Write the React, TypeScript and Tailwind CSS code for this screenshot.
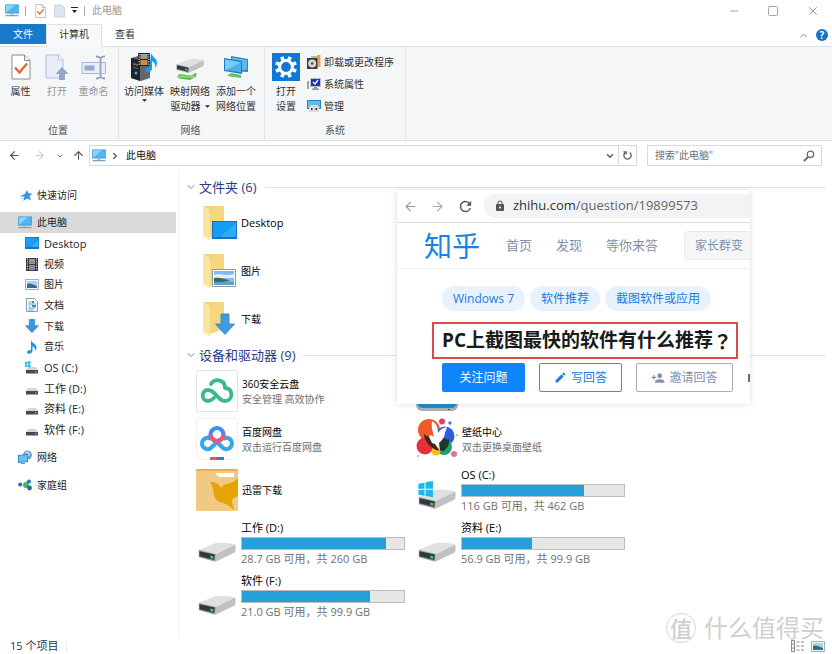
import type { ReactNode } from 'react'
import { ArrowLeft, ArrowRight, ArrowUp, ChevronDown, ChevronRight, ChevronUp, Minus, Square, X } from 'lucide-react'
import { MdEdit, MdLock, MdPersonAdd, MdRefresh } from 'react-icons/md'

/* ---------- icons ---------- */

function PcIcon() {
  return (
    <svg viewBox="0 0 28 26" className="w-[14px] h-[13px] shrink-0">
      <rect x="0.5" y="1" width="27" height="18" fill="#2b8fd3" />
      <path d="M2 2.500h24v15H2z" fill="#4fb4f0" />
      <path d="M2 17.500V2.500h18z" fill="#8ad3fb" />
      <path d="M11 19h6v3h-6z" fill="#a9bccb" />
      <path d="M1 22h26v2.500H1z" fill="#7da0ba" />
    </svg>
  )
}

function CheckDocIcon({ className }: { className: string }) {
  return (
    <svg viewBox="0 0 20 26" className={className}>
      <path d="M1 1h12.500L19 6.500V25H1z" fill="#fff" stroke="#8c8c8c" />
      <path d="M13.500 1v5.500H19" fill="#eee" stroke="#8c8c8c" />
      <path d="M4 13.500l4.500 5 7.500-9" fill="none" stroke="#e2682c" strokeWidth="2.400" />
    </svg>
  )
}

function OpenDocIcon() {
  return (
    <svg viewBox="0 0 24 28" className="w-6 h-7">
      <path d="M1 2h12.500L18 6.500V25H1z" fill="#e9edf8" stroke="#b3c1dd" />
      <path d="M13.500 2v5H18" fill="#fff" stroke="#b3c1dd" />
      <path d="M17 14l6.500 7H20v6h-6v-6h-3.500z" fill="#93a6c8" />
    </svg>
  )
}

function RenameIcon() {
  return (
    <svg viewBox="0 0 26 28" className="w-[26px] h-7">
      <path d="M1 9.500h23.500v11H1z" fill="#e9eef9" stroke="#a9b7d6" />
      <path d="M3.500 12.500h10v5h-10z" fill="#93a9d4" />
      <path d="M15 3.500c2.500 0 4 .8 4.500 2 .5-1.200 2-2 4.500-2M19.500 5v19M15 25.500c2.500 0 4-.8 4.500-2 .5 1.200 2 2 4.500 2" fill="none" stroke="#93a3c4" strokeWidth="1.800" />
    </svg>
  )
}

function MediaIcon() {
  return (
    <svg viewBox="0 0 28 28" className="w-7 h-7">
      <path d="M1 5l7-2 12 2v20l-9 3-10-3z" fill="#60676d" />
      <path d="M1 5l9 2v21l-9-3z" fill="#202428" />
      <path d="M3 10l5 1v2l-5-1zM3 14l5 1v1l-5-1z" fill="#5e6b75" />
      <circle cx="6" cy="20" r="1.500" fill="#31a9ef" />
      <path d="M8 0h12v13H8z" fill="#252321" />
      <path d="M10.500 1h7v5h-7z" fill="#86aad0" />
      <path d="M10.500 4l3-1 4 2v1h-7zM10.500 7h7v5h-7z" fill="#bd9355" />
      <path d="M9.200 1v11M18.800 1v11" stroke="#f2f2f2" strokeDasharray="1.200 1.200" />
      <path d="M21 0c1 4 6 5 6 10 0 2-1 4-2 5 1-4-1-6-3-7v8c0 3-6 4.500-6.500 1.500-.3-2 2-3.500 4-3z" fill="#1c9be8" />
    </svg>
  )
}

function DriveShape() {
  return (
    <>
      <path d="M2 21L50 1c18-2 42 0 59 4L52 33z" fill="#dfe0e2" />
      <path d="M52 33l57-28c2 6 1 17 0 23L50 56z" fill="#bfc1c4" />
      <path d="M1 21l51 12-2 23L1 43z" fill="#9a9da0" />
      <path d="M3 25l45 10-1 16L3 40z" fill="#35383b" />
      <path d="M35 38l9 2v7l-9-2z" fill="#3fd05a" />
    </>
  )
}

function WindowsFlag() {
  return <path d="M0-18l18-3v18H0zM21-22l22-4v23H21zM0 0h18v18L0 15zM21 0h22v22l-22-4z" fill="#18b9ee" />
}

function DriveIcon({ windows = false }: { windows?: boolean }) {
  return (
    <svg viewBox="0 -26 110 83" className="w-[38px] h-[28px]">
      <DriveShape />
      {windows && <WindowsFlag />}
    </svg>
  )
}

function MapDriveIcon() {
  return (
    <svg viewBox="0 -20 110 104" className="w-7 h-[26px]">
      <path d="M10 60l50 6 20-12v16L55 84 10 78z" fill="#55b947" />
      <path d="M4 66h72v9H4z" fill="#8ed482" />
      <DriveShape />
    </svg>
  )
}

function NetPlaceIcon() {
  return (
    <svg viewBox="0 0 26 24" className="w-[26px] h-6">
      <path d="M8 1l17 3v13l-17-1z" fill="#2786c8" />
      <path d="M9 2.500l15 2.500v10l-15-.500z" fill="#5db9f0" />
      <path d="M1 3l18 3v13L1 16z" fill="#1d7dc2" />
      <path d="M2 4.500l16 2.700v10L2 15z" fill="#4cb1ef" />
      <path d="M2 4.500l16 2.700L3 15.200 2 15z" fill="#7accf8" />
      <path d="M8 18l10 2v3l-14-2z" fill="#65c35a" />
    </svg>
  )
}

function GearIcon() {
  return (
    <svg viewBox="0 0 28 28" className="w-7 h-7">
      <path d="M0 0h28v28H0z" fill="#0f78d4" />
      <circle cx="14" cy="14" r="6.400" fill="none" stroke="#fff" strokeWidth="3" />
      <g stroke="#fff" strokeWidth="3.600">
        <path d="M14 3v4M14 21v4M3 14h4M21 14h4" transform="rotate(22.500 14 14)" />
        <path d="M14 3v4M14 21v4M3 14h4M21 14h4" transform="rotate(67.500 14 14)" />
      </g>
    </svg>
  )
}

function UninstallIcon() {
  return (
    <svg viewBox="0 0 14 14" className="w-[14px] h-[14px]">
      <path d="M4 1h7v11H4z" fill="#a9c38b" />
      <path d="M10 0h3.500v12H10z" fill="#e2a36b" />
      <path d="M0 3h10.500v11H0z" fill="#3c3c3c" />
      <circle cx="5.200" cy="8.500" r="4" fill="#d9d9d9" />
      <circle cx="5.200" cy="8.500" r="1.300" fill="#454545" />
    </svg>
  )
}

function SystemPropsIcon() {
  return (
    <svg viewBox="0 0 14 14" className="w-[14px] h-[14px]">
      <path d="M0 4h2v8H0z" fill="#9aa1a8" />
      <path d="M3 1h11v9H3z" fill="#b9bfd0" />
      <path d="M4 2h9v7H4z" fill="#2530b4" />
      <path d="M6 5l2 2 3-4" fill="none" stroke="#fff" strokeWidth="1.300" />
      <path d="M7 10h3v1.500h2V13H5v-1.500h2z" fill="#8b94a5" />
    </svg>
  )
}

function ManageIcon() {
  return (
    <svg viewBox="0 0 14 14" className="w-[14px] h-[14px]">
      <path d="M0 1h14v9H0z" fill="#2c82be" />
      <path d="M1 2h12v7H1z" fill="#62bbed" />
      <path d="M2 8l2-2h6l2 2v5H2z" fill="#d8dadc" />
      <path d="M4 9h1.500v2H4zM8.500 9H10v2H8.500z" fill="#333" />
    </svg>
  )
}

function StarIcon() {
  return (
    <svg viewBox="0 0 14 14" className="w-[13px] h-[13px] shrink-0">
      <path d="M7.500 1l1.700 3.600 4.300.2-3.200 3 1.600 4.500-4-2.200L3.500 13l1.200-4.300L1 7l4.300-1.500z" fill="#2f97dc" />
      <path d="M0 8h5M1 10h3" stroke="#7cbde8" strokeWidth="0.800" />
    </svg>
  )
}

function DesktopIcon() {
  return (
    <svg viewBox="0 0 14 12" className="w-[14px] h-3">
      <path d="M0 0h14v12H0z" fill="#1273c4" />
      <path d="M.7.7h12.600v9.300H.7z" fill="#1c9cf2" />
      <path d="M6 10l7.300-7v7z" fill="#35abf8" />
    </svg>
  )
}

function VideoIcon() {
  return (
    <svg viewBox="0 0 12 13" className="w-3 h-[13px]">
      <path d="M0 0h12v13H0z" fill="#3b3a3d" />
      <path d="M3 1h6v5H3z" fill="#7f9bc4" />
      <path d="M3 4l3-1.500L9 5v1H3z" fill="#b48e4e" />
      <path d="M3 7h6v5H3z" fill="#8d86ab" />
      <path d="M1.400.5v12M10.600.5v12" stroke="#ddd" strokeDasharray="1.200 1.200" />
    </svg>
  )
}

function PictureIcon() {
  return (
    <svg viewBox="0 0 14 11" className="w-[14px] h-[11px]">
      <path d="M.5.5h13v10H.5z" fill="#f4f7fa" stroke="#a5adb5" />
      <path d="M2 2h10v7H2z" fill="#a9d5ef" />
      <path d="M2 5c3-1 5 0 10 2v2H2z" fill="#3b6b84" />
    </svg>
  )
}

function TextDocIcon() {
  return (
    <svg viewBox="0 0 12 14" className="w-3 h-[14px]">
      <path d="M.5.5h8l3 3v10H.5z" fill="#fff" stroke="#8e9aa3" />
      <path d="M2.500 4h3M2.500 6h7M2.500 8h2M2.500 10h7M2.500 12h5" stroke="#4aa3d2" />
      <path d="M6 3h2v2H6zM6 7h4v2H6z" fill="#3b8ab8" />
    </svg>
  )
}

function DownIcon() {
  return (
    <svg viewBox="0 0 20 20" className="w-[14px] h-[14px]">
      <path d="M6 0.500h8v9h5.500L10 19.500.5 9.500H6z" fill="#3f93da" stroke="#2a7fc5" strokeWidth="0.800" />
    </svg>
  )
}

function MusicIcon() {
  return (
    <svg viewBox="0 0 12 14" className="w-3 h-[14px]">
      <path d="M5 0c1 3 5 4 5.500 7 .2 1.500-.5 3-1.500 4 .5-2.500-.5-4-2.500-4.500V11c0 2.500-5 4-5.500 1.500-.3-1.700 2-3 4-2.500z" fill="#1d96e2" />
    </svg>
  )
}

function SmallDriveIcon({ windows = false }: { windows?: boolean }) {
  return (
    <svg viewBox="0 0 14 13" className="w-[14px] h-[13px]">
      <path d="M3 6h8l2 3H1z" fill="#d3d5d7" />
      <path d="M1 9h12v3.500H1z" fill="#45494c" />
      <path d="M10 10.200h1.500v1H10z" fill="#6fe07f" />
      {windows && <path d="M0 1l2-.3V3H0zM2.500.6L5.500 0v3h-3zM0 3.500h2V6l-2-.3zM2.500 3.500h3v3l-3-.4z" fill="#2bb6ea" />}
    </svg>
  )
}

function NetworkIcon() {
  return (
    <svg viewBox="0 0 14 14" className="w-[14px] h-[14px] shrink-0">
      <circle cx="9.500" cy="5" r="4.500" fill="#6f9fc0" />
      <path d="M7 2l3-1 3 3-3 3z" fill="#a9cde2" />
      <path d="M0 5l10-1v8l-10 1z" fill="#2686c9" />
      <path d="M.8 5.800l8.400-.8v6.200L.8 12z" fill="#67bff2" />
      <path d="M3 13l4-.5v1.500H3z" fill="#7f93a2" />
    </svg>
  )
}

function HomegroupIcon() {
  return (
    <svg viewBox="0 0 14 12" className="w-[14px] h-3 shrink-0">
      <path d="M9 1.500L6 7l6 3z" fill="#51b848" />
      <circle cx="2.200" cy="5.500" r="2" fill="#2a6fa8" />
      <circle cx="8" cy="6" r="3" fill="#4bb354" />
      <circle cx="11" cy="2.500" r="2" fill="#2676b2" />
      <circle cx="11.500" cy="9" r="2.400" fill="#236a9f" />
    </svg>
  )
}

function FolderIcon({ kind }: { kind: 'desktop' | 'picture' | 'download' }) {
  return (
    <svg viewBox="0 0 36 36" className="w-9 h-9">
      <path d="M1 1h21v27l-14 4z" fill="#f3d37c" />
      <path d="M1 1l7 3.500v31L1 31z" fill="#fbe3a0" />
      <path d="M8 4.500L22 1v27L8 33z" fill="#f5d681" />
      {kind === 'desktop' && (
        <>
          <path d="M10 16h25v18H10z" fill="#1672bd" />
          <path d="M11 17h23v15H11z" fill="#139df5" />
          <path d="M18 32l16-14v14z" fill="#2cabf9" />
        </>
      )}
      {kind === 'picture' && (
        <>
          <path d="M10.500 16.500h23v17h-23z" fill="#fff" stroke="#8c98a4" />
          <path d="M12 18h20v14H12z" fill="#7fbbed" />
          <path d="M12 22c5-3 9 2 20-1v4H12z" fill="#e5f1f8" />
          <path d="M12 25c4-1 12 1 16 3l-16 2z" fill="#3f6b4f" />
          <path d="M12 29h20v3H12z" fill="#5f9fc3" />
        </>
      )}
      {kind === 'download' && <path d="M19 13h8v10h5.500L23 33.500 13.500 23H19z" fill="#3f9be3" stroke="#2c82c8" strokeWidth="0.800" />}
    </svg>
  )
}

function Cloud360Icon() {
  return (
    <svg viewBox="0 0 42 42" className="w-[42px] h-[42px]">
      <rect x="0.500" y="0.500" width="41" height="41" rx="2" fill="#fff" stroke="#e2e2e2" />
      <path d="M15 14c3-6 14-5 14 4M29 18c9 0 8 13 0 13-8 0-9-11-17-11-7 0-7 11 0 11 3 0 4-1 6-3" fill="none" stroke="#3bb98c" strokeWidth="3.800" strokeLinecap="round" />
    </svg>
  )
}

function BaiduIcon() {
  return (
    <svg viewBox="0 0 42 42" className="w-[42px] h-[42px]">
      <rect x="0.500" y="0.500" width="41" height="41" rx="2" fill="#fff" stroke="#f0f0f0" />
      <g fill="none" strokeWidth="4.200">
        <path d="M15 21a5.600 5.600 0 1 0 1 8l5-5 5 5a5.600 5.600 0 1 0 1-8" stroke="#32a7ee" />
        <circle cx="21" cy="16.500" r="6.500" stroke="#3b8ff0" />
        <path d="M14.500 16.500a6.500 6.500 0 0 0 13 0" stroke="#ef5672" />
      </g>
      <path d="M14 39h7v3h-7z" fill="#e55370" />
      <path d="M21 39h7v3h-7z" fill="#2a7fd6" />
    </svg>
  )
}

function XunleiIcon() {
  return (
    <svg viewBox="0 0 42 42" className="w-[42px] h-[42px]">
      <rect width="42" height="42" rx="1.500" fill="#f1c984" />
      <path d="M0 1.500Q0 0 2 0h38q2 0 2 2H0z" fill="#e8b14b" />
      <path d="M19 4h19v4H23z" fill="#fff" />
      <path d="M14 13c5 0 8 1 11 6 2-3 5-4 9-5 3-1 5-2 8-5v18l-4 2c-2 1-2 2-2 4l2 8c-4-3-7-6-11-7-5-1-8-4-9-8-1-3 0-4-1-7-1-2-2-4-3-6z" fill="#e6a400" />
    </svg>
  )
}

function WallpaperIcon() {
  return (
    <svg viewBox="0 0 42 42" className="w-[42px] h-[42px]">
      <circle cx="13" cy="12" r="11" fill="#f0592a" />
      <circle cx="9" cy="28" r="8.500" fill="#e5303a" />
      <circle cx="29" cy="18" r="9.500" fill="#2f5de0" />
      <circle cx="28" cy="29" r="8" fill="#1fa468" />
      <circle cx="20" cy="33" r="4.500" fill="#f7bd1c" />
      <path d="M8 16c3 3 8 4 12 2l11 3-3 12-8-1c-6-3-12-9-12-16z" fill="#46241a" />
      <path d="M22 25l11-4c1 5-2 11-7 12z" fill="#173c2c" />
      <path d="M16 3c5 3 6 8 6 12 2-3 4-5 9-6-1 2 0 3-2 5 0 6-4 9-6 11l1 8-5-7-3-1c-1-3-3-5-3-7 2-1 4 0 5 1-1-5-3-10-2-16z" fill="#fff" />
      <circle cx="26" cy="3.500" r="3" fill="#e0444e" />
      <circle cx="34" cy="5" r="1.700" fill="#4477ef" />
      <circle cx="38" cy="36" r="3" fill="#ea6fa4" />
      <circle cx="41" cy="17" r="1" fill="#a9bb35" />
      <circle cx="2" cy="38" r="1" fill="#efa244" />
    </svg>
  )
}

function DeviceIcon() {
  return (
    <svg viewBox="0 0 42 42" className="w-[42px] h-[42px]">
      <rect y="2" width="42" height="39" rx="6" fill="#a9b1b7" />
      <rect x="1.500" y="2" width="39" height="36" rx="5" fill="#2589cf" />
      <path d="M32 39h2v1h-2z" fill="#555" />
    </svg>
  )
}

function SearchIcon() {
  return (
    <svg viewBox="0 0 12 12" className="w-3 h-3" fill="none" stroke="#666">
      <circle cx="7.500" cy="4.300" r="3.200" strokeWidth="1.300" />
      <path d="M5.200 6.800L1 11" strokeWidth="1.900" />
    </svg>
  )
}

function Caret() {
  return (
    <svg viewBox="0 0 6 3" className="w-[5px] h-[3px]">
      <path d="M0 0h6L3 3z" fill="#222" />
    </svg>
  )
}

/* ---------- data ---------- */

const treeItems = [
  { label: 'Desktop', icon: <DesktopIcon /> },
  { label: '视频', icon: <VideoIcon /> },
  { label: '图片', icon: <PictureIcon /> },
  { label: '文档', icon: <TextDocIcon /> },
  { label: '下载', icon: <DownIcon /> },
  { label: '音乐', icon: <MusicIcon /> },
  { label: 'OS (C:)', icon: <SmallDriveIcon windows /> },
  { label: '工作 (D:)', icon: <SmallDriveIcon /> },
  { label: '资料 (E:)', icon: <SmallDriveIcon /> },
  { label: '软件 (F:)', icon: <SmallDriveIcon /> },
]

const folders = [
  { label: 'Desktop', kind: 'desktop' },
  { label: '图片', kind: 'picture' },
  { label: '下载', kind: 'download' },
] as const

/* ---------- ribbon ---------- */

function RibbonGroup({ title, className, children }: { title: string; className: string; children: ReactNode }) {
  return (
    <section className={`flex flex-col justify-between border-r border-[#e3e5e8] ${className}`}>
      <div className="flex">{children}</div>
      <h2 className="pr-1 pb-0.5 text-center leading-4 text-[#555]">{title}</h2>
    </section>
  )
}

function RibbonButton({ icon, lines, className, arrow }: { icon: ReactNode; lines: string[]; className: string; arrow?: 'below' | 'inline' }) {
  return (
    <button className={`flex flex-col items-center pt-1.5 leading-[15px] whitespace-nowrap ${className}`}>
      <span className="flex h-7 items-center justify-center mb-[3px]">{icon}</span>
      {lines.map((line, i) => (
        <span key={line} className="flex items-center gap-1">
          {line}
          {arrow === 'inline' && i === lines.length - 1 && <Caret />}
        </span>
      ))}
      {arrow === 'below' && <Caret />}
    </button>
  )
}

function Ribbon() {
  return (
    <div className="flex h-[95px] shrink-0 border-y border-[#dfe2e5] bg-[#f4f6f8] text-[#333]">
      <RibbonGroup title="位置" className="w-[119px] pl-0.5">
        <RibbonButton icon={<CheckDocIcon className="w-5 h-[26px]" />} lines={['属性']} className="w-[37px]" />
        <RibbonButton icon={<OpenDocIcon />} lines={['打开']} className="w-9 text-[#999]" />
        <RibbonButton icon={<RenameIcon />} lines={['重命名']} className="w-[37px] text-[#999]" />
      </RibbonGroup>
      <RibbonGroup title="网络" className="w-[146px] pl-0.5">
        <RibbonButton icon={<MediaIcon />} lines={['访问媒体']} className="w-[46px]" arrow="below" />
        <RibbonButton icon={<MapDriveIcon />} lines={['映射网络', '驱动器']} className="w-[46px]" arrow="inline" />
        <RibbonButton icon={<NetPlaceIcon />} lines={['添加一个', '网络位置']} className="w-[46px]" />
      </RibbonGroup>
      <RibbonGroup title="系统" className="w-[141px] pl-1">
        <RibbonButton icon={<GearIcon />} lines={['打开', '设置']} className="w-[34px]" />
        <div className="flex flex-col pt-1 pl-1">
          <button className="flex h-[22px] items-center gap-[3px]"><UninstallIcon />卸载或更改程序</button>
          <button className="flex h-[22px] items-center gap-[3px]"><SystemPropsIcon />系统属性</button>
          <button className="flex h-[22px] items-center gap-[3px]"><ManageIcon />管理</button>
        </div>
      </RibbonGroup>
    </div>
  )
}

/* ---------- top bars ---------- */

function TitleBar() {
  return (
    <header className="flex h-6 shrink-0 items-center pb-[3px] pl-[5px] pr-3">
      <PcIcon />
      <span className="ml-1.5 h-[10px] w-px bg-[#aaa]" />
      <CheckDocIcon className="ml-[9px] w-[11px] h-[14px]" />
      <svg viewBox="0 0 12 14" className="ml-2 w-[11px] h-[14px]">
        <path d="M.5.500h8l3 3v10H.5z" fill="#dde4f1" stroke="#c5cfe2" />
      </svg>
      <svg viewBox="0 0 7 7" className="ml-1.5 w-[7px] h-[7px]">
        <path d="M0 0h7v1H0zM1 3h5L3.500 6z" fill="#222" />
      </svg>
      <span className="ml-1.5 h-[10px] w-px bg-[#aaa]" />
      <h1 className="ml-[7px] text-[#999]">此电脑</h1>
      <div className="ml-auto flex gap-[27px] text-[#888]">
        <button aria-label="最小化"><Minus className="w-3 h-3" strokeWidth={1.5} /></button>
        <button aria-label="最大化"><Square className="w-3 h-3" strokeWidth={1.5} /></button>
        <button aria-label="关闭"><X className="w-[14px] h-[14px]" strokeWidth={1.5} /></button>
      </div>
    </header>
  )
}

function TabBar() {
  return (
    <nav className="flex h-[22px] shrink-0 items-stretch text-[#333]">
      <button className="mb-0.5 w-[46px] bg-[#1979ca] text-white">文件</button>
      <button className="relative -mb-px w-14 border border-b-0 border-[#dfe2e5] bg-[#f8f9fa] pb-1">计算机</button>
      <button className="w-[46px] pb-0.5">查看</button>
      <div className="ml-auto flex items-center gap-[7px] pr-1">
        <button aria-label="折叠功能区"><ChevronUp className="w-[11px] h-[11px] text-[#777]" /></button>
        <button aria-label="帮助" className="flex w-3 h-3 items-center justify-center rounded-full bg-[#1273c4] font-bold text-white leading-3">?</button>
      </div>
    </nav>
  )
}

function AddressBar() {
  return (
    <div className="flex h-[29px] shrink-0 items-center pl-2 pr-2.5">
      <button aria-label="后退"><ArrowLeft className="w-[13px] h-[13px] text-[#555]" /></button>
      <button aria-label="前进" className="ml-3"><ArrowRight className="w-[13px] h-[13px] text-[#ccc]" /></button>
      <button aria-label="最近位置" className="ml-2.5"><ChevronDown className="w-2 h-2 text-[#777]" strokeWidth={3} /></button>
      <button aria-label="上移" className="ml-2"><ArrowUp className="w-[13px] h-[13px] text-[#555]" /></button>
      <div className="ml-1 flex h-[21px] flex-1 items-center border border-[#d9d9d9] pl-0.5">
        <PcIcon />
        <ChevronRight className="ml-1 w-2.5 h-2.5 text-[#555]" strokeWidth={3} />
        <span className="ml-1.5 text-[#111]">此电脑</span>
        <button aria-label="展开" className="ml-auto mr-[3px]"><ChevronDown className="w-2.5 h-2.5 text-[#666]" strokeWidth={4} /></button>
        <button aria-label="刷新" className="flex h-full w-[18px] items-center justify-center border-l border-[#d9d9d9]">
          <svg viewBox="0 0 12 12" className="w-[11px] h-[11px]" fill="none" stroke="#666" strokeWidth="1.500">
            <path d="M4 2.500a4 4 0 1 0 4.500.3M4.500 5V2H1.500" />
          </svg>
        </button>
      </div>
      <label className="ml-2.5 flex h-[21px] w-[175px] items-center border border-[#d9d9d9] pl-[7px] pr-1.5">
        <input aria-label="搜索" placeholder={'搜索"此电脑"'} className="min-w-0 flex-1 outline-none placeholder:text-[#707070]" />
        <SearchIcon />
      </label>
    </div>
  )
}

/* ---------- sidebar ---------- */

function Sidebar() {
  return (
    <aside className="w-[179px] shrink-0 border-r border-[#f3f3f3] pr-0.5 pt-[14px] text-[#222]">
      <a href="#quick" className="flex h-[22px] items-center gap-1 pl-5"><StarIcon />快速访问</a>
      <a href="#pc" className="mt-1.5 flex h-[21px] items-center gap-[5px] bg-[#d9d9d9] pl-[18px]"><PcIcon />此电脑</a>
      <ul className="grid h-[207px] auto-rows-fr">
        {treeItems.map((item) => (
          <li key={item.label}>
            <a href="#item" className="flex h-full items-center gap-[5px] pl-[25px]">
              <span className="flex w-[14px] justify-center">{item.icon}</span>
              <span className={/[A-Z]/.test(item.label) ? 'text-[11px]' : ''}>{item.label}</span>
            </a>
          </li>
        ))}
      </ul>
      <a href="#network" className="mt-1.5 flex h-[22px] items-center gap-[5px] pl-[18px]"><NetworkIcon />网络</a>
      <a href="#homegroup" className="mt-1.5 flex h-[22px] items-center gap-[5px] pl-[18px]"><HomegroupIcon />家庭组</a>
    </aside>
  )
}

/* ---------- content ---------- */

function SectionHeader({ title }: { title: string }) {
  return (
    <div className="flex h-6 items-center pl-1.5 pr-1.5">
      <ChevronDown className="w-3 h-3 text-[#777]" strokeWidth={1.8} />
      <h2 className="ml-0.5 text-[13px] text-[#2b3a85]">{title}</h2>
      <span className="ml-2 h-px flex-1 bg-[#e2e2e2]" />
    </div>
  )
}

function AppTile({ icon, name, note }: { icon: ReactNode; name: string; note?: string }) {
  return (
    <li className="flex items-center gap-1">
      {icon}
      <div className="pt-0.5 leading-[15px]">
        <p className="text-black">{name}</p>
        {note && <p className="text-[#707070]">{note}</p>}
      </div>
    </li>
  )
}

function DriveTile({ name, note, used, windows }: { name: string; note: string; used: number; windows?: boolean }) {
  return (
    <li className="flex items-center gap-[3px] text-[11px]">
      <span className="flex w-[42px] justify-center pt-2.5"><DriveIcon windows={windows} /></span>
      <div className="pt-px">
        <p className="leading-[15px] text-black">{name}</p>
        <div role="meter" aria-label={name} aria-valuenow={used} className="mt-0.5 mb-px h-[13px] w-[164px] border border-[#bcbcbc] bg-[#e6e6e6]">
          <div className="h-full bg-[#26a0da]" style={{ width: `${used}%` }} />
        </div>
        <p className="leading-[15px] text-[#707070]">{note}</p>
      </div>
    </li>
  )
}

function Content() {
  return (
    <main className="relative flex-1 pt-[5px]">
      <SectionHeader title="文件夹 (6)" />
      <ul>
        {folders.map((folder) => (
          <li key={folder.label} className="flex h-12 items-center gap-[3px] pl-[23px]">
            <FolderIcon kind={folder.kind} />
            <span className={folder.kind === 'desktop' ? 'pb-0.5 text-[11px]' : ''}>{folder.label}</span>
          </li>
        ))}
      </ul>
      <SectionHeader title="设备和驱动器 (9)" />
      <ul className="grid grid-cols-[220px_220px] grid-rows-[48px_48px_53px_53px_53px] pl-[17px]">
        <AppTile icon={<Cloud360Icon />} name="360安全云盘" note="安全管理 高效协作" />
        <li className="flex items-center"><DeviceIcon /></li>
        <AppTile icon={<BaiduIcon />} name="百度网盘" note="双击运行百度网盘" />
        <AppTile icon={<WallpaperIcon />} name="壁纸中心" note="双击更换桌面壁纸" />
        <AppTile icon={<XunleiIcon />} name="迅雷下载" />
        <DriveTile name="OS (C:)" note="116 GB 可用，共 462 GB" used={75} windows />
        <DriveTile name="工作 (D:)" note="28.7 GB 可用，共 260 GB" used={89} />
        <DriveTile name="资料 (E:)" note="56.9 GB 可用，共 99.9 GB" used={43} />
        <DriveTile name="软件 (F:)" note="21.0 GB 可用，共 99.9 GB" used={79} />
      </ul>
      <BrowserClip />
    </main>
  )
}

/* Browser capture pinned over the file list */
function BrowserClip() {
  return (
    <article className="absolute left-[218px] top-5 w-[353px] overflow-hidden bg-white pb-3 text-xs shadow-[0_0_6px_rgba(0,0,0,0.15)]">
      <div className="flex h-[33px] items-center border-b border-[#dcdcdc] pl-1.5">
        <button aria-label="后退"><ArrowLeft className="w-[15px] h-[15px] text-[#999]" strokeWidth={1.8} /></button>
        <button aria-label="前进" className="ml-3"><ArrowRight className="w-[15px] h-[15px] text-[#aaa]" strokeWidth={1.8} /></button>
        <button aria-label="重新加载" className="ml-3"><MdRefresh className="w-[17px] h-[17px] text-[#555]" /></button>
        <div className="ml-2.5 flex h-6 flex-1 items-center gap-[7px] rounded-l-full bg-[#f1f3f4] pl-2.5">
          <MdLock className="w-3 h-3 text-[#555]" />
          <span className="text-[13px] text-[#666]"><span className="text-[#333]">zhihu.com</span>/question/19899573</span>
        </div>
      </div>
      <nav className="flex h-[46px] items-center border-b border-[#f0f0f0] pl-[27px] text-[13px] text-[#8590a6] whitespace-nowrap">
        <a href="#home" className="text-[28px] font-normal leading-8 text-[#1a82e0]">知乎</a>
        <a href="#index" className="ml-[26px]">首页</a>
        <a href="#explore" className="ml-6">发现</a>
        <a href="#answer" className="ml-6">等你来答</a>
        <span className="ml-[26px] flex h-[29px] w-20 shrink-0 items-center rounded-l border border-[#ebebeb] bg-[#f6f6f6] pl-2.5 text-xs">家长群变</span>
      </nav>
      <ul className="flex gap-[5px] pt-[17px] pl-[45px] text-[#1a7be0] whitespace-nowrap">
        <li className="h-[25px] rounded-full bg-[#e8f2fe] px-[11px] leading-[25px]">Windows 7</li>
        <li className="h-[25px] rounded-full bg-[#e8f2fe] px-[11px] leading-[25px]">软件推荐</li>
        <li className="h-[25px] rounded-full bg-[#e8f2fe] px-[11px] leading-[25px]">截图软件或应用</li>
      </ul>
      <h2 className="ml-[35px] mt-[11px] flex h-[37px] w-[306px] items-center border-2 border-[#dd4a48] pl-2 text-[19px] font-bold text-[#1a1a1a] whitespace-nowrap">
        PC上截图最快的软件有什么推荐<span className="font-['Noto_Sans_CJK_TC',sans-serif]">？</span>
      </h2>
      <div className="mt-1 flex items-center pl-[45px]">
        <button className="h-[29px] w-[83px] rounded-[2px] bg-[#0f84ff] text-white">关注问题</button>
        <button className="ml-3.5 flex h-[29px] w-[83px] items-center justify-center gap-1 rounded-[2px] border border-[#3a8ee6] text-[#1a7be0]"><MdEdit className="w-[13px] h-[13px]" />写回答</button>
        <button className="ml-3.5 flex h-[29px] w-[97px] items-center justify-center gap-1 rounded-[2px] border border-[#a6adba] text-[#8590a6]"><MdPersonAdd className="w-[14px] h-[14px]" />邀请回答</button>
        <span className="ml-auto h-2 w-0.5 bg-[#666c78]" />
      </div>
    </article>
  )
}

/* ---------- status bar ---------- */

function StatusBar() {
  return (
    <footer className="relative flex h-4 shrink-0 items-center pl-2.5 pr-[7px] text-[#26364f]">
      <span className="border-r border-[#eee] pr-2 text-[11px] leading-3">15 个项目</span>
      <div className="ml-auto flex gap-1.5">
        <button aria-label="详细信息">
          <svg viewBox="0 0 14 12" className="w-[14px] h-3" stroke="#888">
            <path d="M.5.500h3v11h-3zM1 4h2M1 8h2M5.500 2h3M10 2h3M5.500 6h3M10 6h3M5.500 10h3M10 10h3" fill="none" />
          </svg>
        </button>
        <button aria-label="大图标"><PictureIcon /></button>
      </div>
      <div className="absolute bottom-2.5 right-2 flex items-center gap-2 pointer-events-none text-[#cfcfcf] whitespace-nowrap">
        <span className="flex w-[30px] h-[30px] items-center justify-center rounded-full border border-[#d6d6d6] text-[22px] font-medium leading-none">值</span>
        <span className="text-[24px] leading-8">什么值得买</span>
      </div>
    </footer>
  )
}

export default function App() {
  return (
    <div className="flex min-h-screen flex-col bg-white font-['Open_Sans','Noto_Sans_CJK_SC',sans-serif] text-[10px] leading-[15px]">
      <TitleBar />
      <TabBar />
      <Ribbon />
      <AddressBar />
      <div className="flex flex-1">
        <Sidebar />
        <Content />
      </div>
      <StatusBar />
    </div>
  )
}
